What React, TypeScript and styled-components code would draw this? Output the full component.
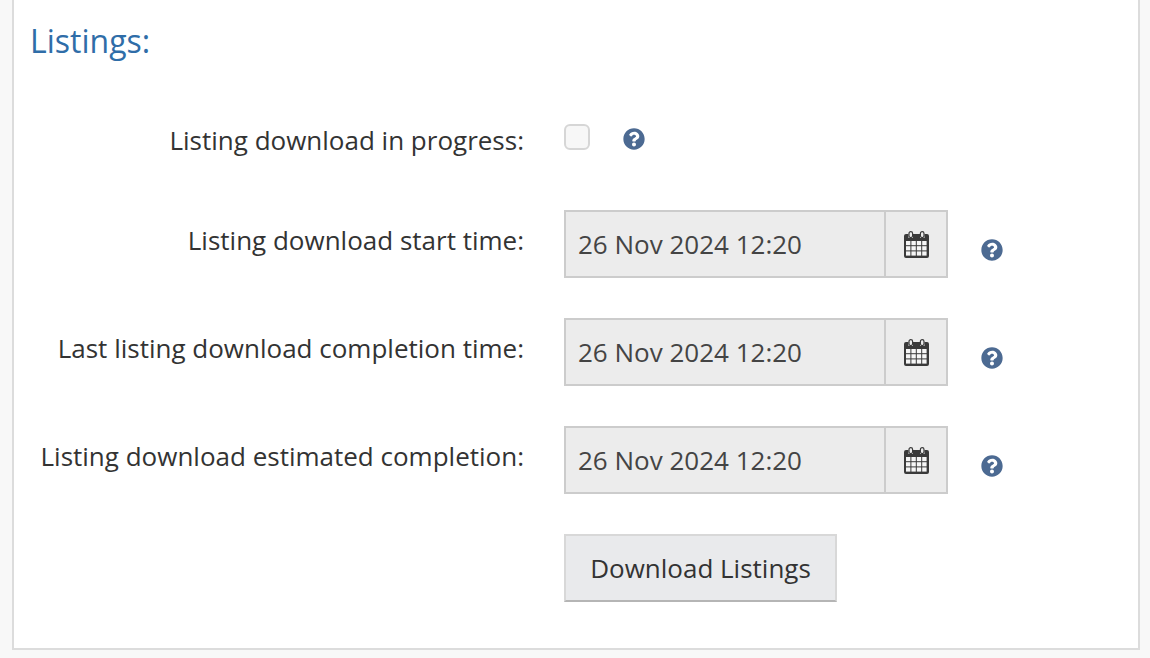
import { ReactNode } from "react";
import styled, { createGlobalStyle } from "styled-components";
import { FaQuestionCircle } from "react-icons/fa";

const GlobalStyle = createGlobalStyle`
  html, body {
    margin: 0;
    padding: 0;
    background: #f8f8f8;
    font-family: "Open Sans", "Liberation Sans", sans-serif;
    color: #333;
  }
`;

const Page = styled.div`
  width: 1150px;
  height: 658px;
  padding: 0 10px 8px 12px;
  box-sizing: border-box;
  overflow: hidden;
`;

const Panel = styled.section`
  height: 658px;
  box-sizing: border-box;
  margin-top: -8px;
  padding: 27px 0 0 16px;
  background: #fff;
  border: 2px solid #dcdcdc;
`;

const Heading = styled.h3`
  margin: 0 0 49px;
  font-size: 32px;
  line-height: 40px;
  font-weight: 400;
  color: #2f6da8;
`;

const Row = styled.div`
  display: flex;
  align-items: flex-start;
  min-height: 60px;
  margin-bottom: 40px;
`;

const Label = styled.label`
  flex: 0 0 494px;
  padding-top: 12px;
  text-align: right;
  font-size: 26px;
  line-height: 36px;
  color: #333;
`;

const Control = styled.div`
  margin-left: 40px;
  display: flex;
  align-items: flex-start;
`;

const Checkbox = styled.span`
  display: block;
  width: 26px;
  height: 26px;
  margin-top: 14px;
  box-sizing: border-box;
  background: #f7f7f7;
  border: 2px solid #d6d6d6;
  border-radius: 6px;
`;

const DateGroup = styled.div`
  display: flex;
  width: 384px;
  height: 68px;
  box-sizing: border-box;
  background: #ececec;
  border: 2px solid #cccccc;
`;

const DateValue = styled.span`
  flex: 1;
  padding-left: 12px;
  font-size: 26px;
  line-height: 64px;
  color: #444;
`;

const DateButton = styled.span`
  flex: 0 0 60px;
  display: flex;
  align-items: center;
  justify-content: center;
  border-left: 2px solid #cccccc;
`;

const Help = styled.span<{ $offset: number; $gap: number }>`
  display: block;
  margin-top: ${(p) => p.$offset}px;
  margin-left: ${(p) => p.$gap}px;
  height: 22px;
  color: #4c6a92;
  font-size: 22px;
  line-height: 0;
`;

const DownloadButton = styled.button`
  display: block;
  width: 273px;
  height: 68px;
  padding: 0;
  box-sizing: border-box;
  background: #e9eaec;
  border: 2px solid #d8d8d8;
  border-bottom-color: #b5b5b5;
  font-family: inherit;
  font-size: 26px;
  color: #333;
`;

function CalendarIcon() {
  const cells = [];
  for (let r = 0; r < 3; r++) {
    for (let c = 0; c < 4; c++) {
      cells.push(<rect key={`${r}-${c}`} x={2 + c * 5.4} y={10 + r * 5.2} width={4.4} height={4.2} fill="#f6f6f6" />);
    }
  }
  return (
    <svg width="25" height="27" viewBox="0 0 25 27" aria-hidden="true">
      <path d="M2 3h2.5v4h4.5V3h7v4h4.5V3H23a2 2 0 0 1 2 2v20a2 2 0 0 1-2 2H2a2 2 0 0 1-2-2V5a2 2 0 0 1 2-2z" fill="#3a3a3a" />
      {cells}
      <rect x="5" y="0.6" width="3.6" height="6" rx="1.8" fill="#ececec" stroke="#3a3a3a" strokeWidth="1.2" />
      <rect x="16.4" y="0.6" width="3.6" height="6" rx="1.8" fill="#ececec" stroke="#3a3a3a" strokeWidth="1.2" />
    </svg>
  );
}

function DateRow({ label, children }: { label: string; children?: ReactNode }) {
  return (
    <Row>
      <Label>{label}</Label>
      <Control>
        <DateGroup>
          <DateValue>26 Nov 2024 12:20</DateValue>
          <DateButton>
            <CalendarIcon />
          </DateButton>
        </DateGroup>
        {children}
      </Control>
    </Row>
  );
}

export default function App() {
  return (
    <Page>
      <GlobalStyle />
      <Panel>
        <Heading>Listings:</Heading>
        <Row>
          <Label>Listing download in progress:</Label>
          <Control>
            <Checkbox />
            <Help $offset={18} $gap={33}>
              <FaQuestionCircle />
            </Help>
          </Control>
        </Row>
        <DateRow label="Listing download start time:">
          <Help $offset={29} $gap={33}>
            <FaQuestionCircle />
          </Help>
        </DateRow>
        <DateRow label="Last listing download completion time:">
          <Help $offset={29} $gap={33}>
            <FaQuestionCircle />
          </Help>
        </DateRow>
        <DateRow label="Listing download estimated completion:">
          <Help $offset={29} $gap={33}>
            <FaQuestionCircle />
          </Help>
        </DateRow>
        <Row>
          <Label />
          <Control>
            <DownloadButton>Download Listings</DownloadButton>
          </Control>
        </Row>
      </Panel>
    </Page>
  );
}
